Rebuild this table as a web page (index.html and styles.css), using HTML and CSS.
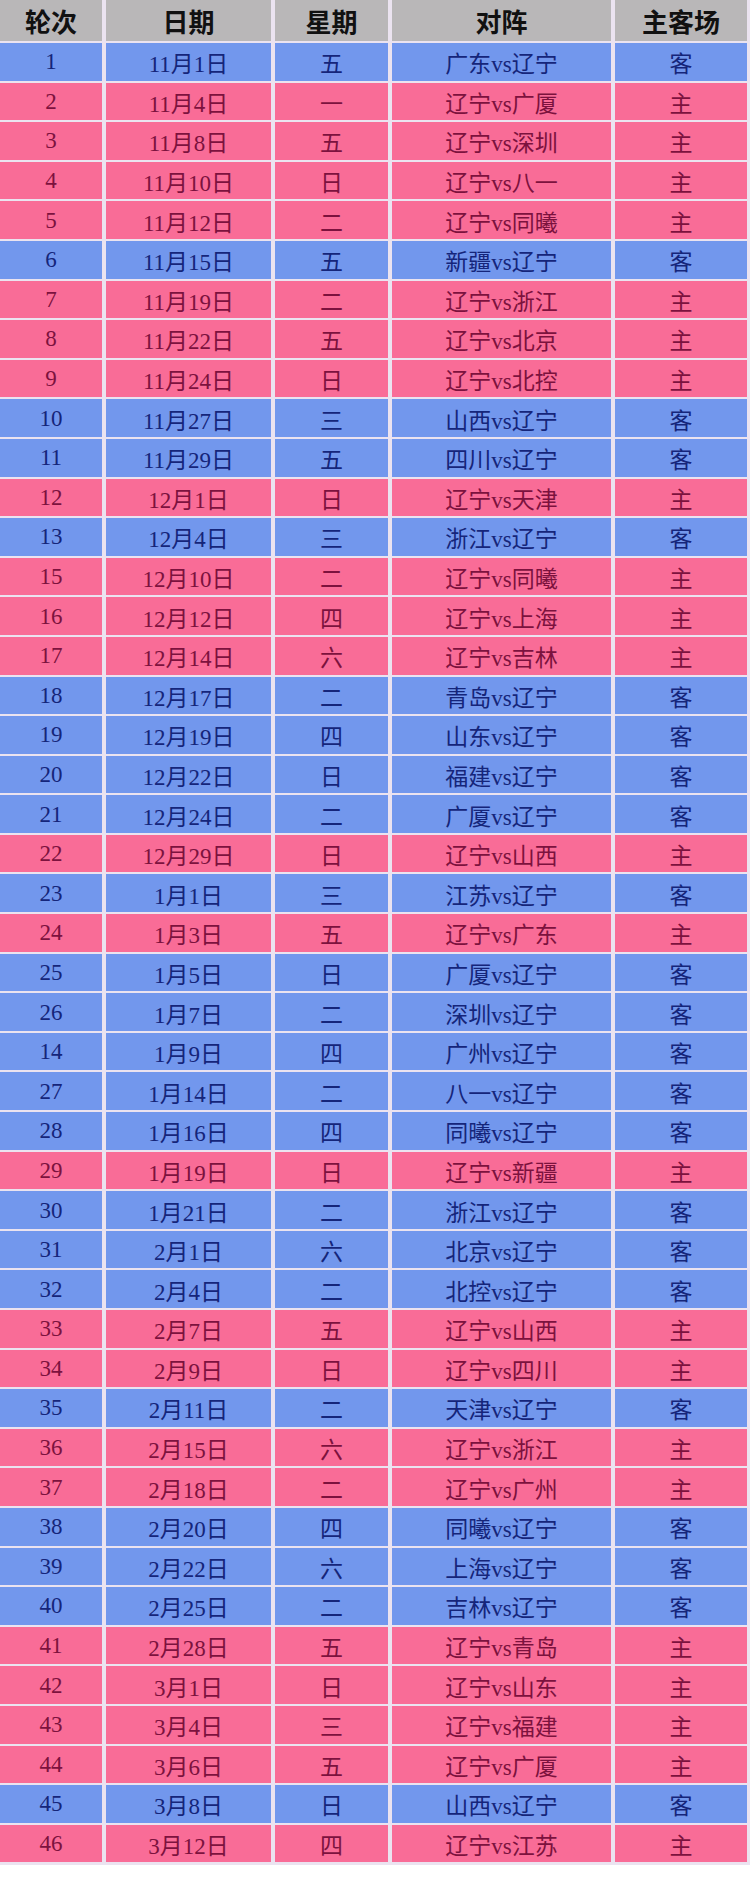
FILE: index.html
```html
<!DOCTYPE html>
<html lang="zh">
<head>
<meta charset="utf-8">
<title>赛程</title>
<link rel="stylesheet" href="styles.css">
</head>
<body>
<div class="sched">
  <div class="row head"><div>轮次</div><div>日期</div><div>星期</div><div>对阵</div><div>主客场</div></div>
  <div class="row away"><div>1</div><div>11月1日</div><div>五</div><div>广东vs辽宁</div><div>客</div></div>
  <div class="row home"><div>2</div><div>11月4日</div><div>一</div><div>辽宁vs广厦</div><div>主</div></div>
  <div class="row home"><div>3</div><div>11月8日</div><div>五</div><div>辽宁vs深圳</div><div>主</div></div>
  <div class="row home"><div>4</div><div>11月10日</div><div>日</div><div>辽宁vs八一</div><div>主</div></div>
  <div class="row home"><div>5</div><div>11月12日</div><div>二</div><div>辽宁vs同曦</div><div>主</div></div>
  <div class="row away"><div>6</div><div>11月15日</div><div>五</div><div>新疆vs辽宁</div><div>客</div></div>
  <div class="row home"><div>7</div><div>11月19日</div><div>二</div><div>辽宁vs浙江</div><div>主</div></div>
  <div class="row home"><div>8</div><div>11月22日</div><div>五</div><div>辽宁vs北京</div><div>主</div></div>
  <div class="row home"><div>9</div><div>11月24日</div><div>日</div><div>辽宁vs北控</div><div>主</div></div>
  <div class="row away"><div>10</div><div>11月27日</div><div>三</div><div>山西vs辽宁</div><div>客</div></div>
  <div class="row away"><div>11</div><div>11月29日</div><div>五</div><div>四川vs辽宁</div><div>客</div></div>
  <div class="row home"><div>12</div><div>12月1日</div><div>日</div><div>辽宁vs天津</div><div>主</div></div>
  <div class="row away"><div>13</div><div>12月4日</div><div>三</div><div>浙江vs辽宁</div><div>客</div></div>
  <div class="row home"><div>15</div><div>12月10日</div><div>二</div><div>辽宁vs同曦</div><div>主</div></div>
  <div class="row home"><div>16</div><div>12月12日</div><div>四</div><div>辽宁vs上海</div><div>主</div></div>
  <div class="row home"><div>17</div><div>12月14日</div><div>六</div><div>辽宁vs吉林</div><div>主</div></div>
  <div class="row away"><div>18</div><div>12月17日</div><div>二</div><div>青岛vs辽宁</div><div>客</div></div>
  <div class="row away"><div>19</div><div>12月19日</div><div>四</div><div>山东vs辽宁</div><div>客</div></div>
  <div class="row away"><div>20</div><div>12月22日</div><div>日</div><div>福建vs辽宁</div><div>客</div></div>
  <div class="row away"><div>21</div><div>12月24日</div><div>二</div><div>广厦vs辽宁</div><div>客</div></div>
  <div class="row home"><div>22</div><div>12月29日</div><div>日</div><div>辽宁vs山西</div><div>主</div></div>
  <div class="row away"><div>23</div><div>1月1日</div><div>三</div><div>江苏vs辽宁</div><div>客</div></div>
  <div class="row home"><div>24</div><div>1月3日</div><div>五</div><div>辽宁vs广东</div><div>主</div></div>
  <div class="row away"><div>25</div><div>1月5日</div><div>日</div><div>广厦vs辽宁</div><div>客</div></div>
  <div class="row away"><div>26</div><div>1月7日</div><div>二</div><div>深圳vs辽宁</div><div>客</div></div>
  <div class="row away"><div>14</div><div>1月9日</div><div>四</div><div>广州vs辽宁</div><div>客</div></div>
  <div class="row away"><div>27</div><div>1月14日</div><div>二</div><div>八一vs辽宁</div><div>客</div></div>
  <div class="row away"><div>28</div><div>1月16日</div><div>四</div><div>同曦vs辽宁</div><div>客</div></div>
  <div class="row home"><div>29</div><div>1月19日</div><div>日</div><div>辽宁vs新疆</div><div>主</div></div>
  <div class="row away"><div>30</div><div>1月21日</div><div>二</div><div>浙江vs辽宁</div><div>客</div></div>
  <div class="row away"><div>31</div><div>2月1日</div><div>六</div><div>北京vs辽宁</div><div>客</div></div>
  <div class="row away"><div>32</div><div>2月4日</div><div>二</div><div>北控vs辽宁</div><div>客</div></div>
  <div class="row home"><div>33</div><div>2月7日</div><div>五</div><div>辽宁vs山西</div><div>主</div></div>
  <div class="row home"><div>34</div><div>2月9日</div><div>日</div><div>辽宁vs四川</div><div>主</div></div>
  <div class="row away"><div>35</div><div>2月11日</div><div>二</div><div>天津vs辽宁</div><div>客</div></div>
  <div class="row home"><div>36</div><div>2月15日</div><div>六</div><div>辽宁vs浙江</div><div>主</div></div>
  <div class="row home"><div>37</div><div>2月18日</div><div>二</div><div>辽宁vs广州</div><div>主</div></div>
  <div class="row away"><div>38</div><div>2月20日</div><div>四</div><div>同曦vs辽宁</div><div>客</div></div>
  <div class="row away"><div>39</div><div>2月22日</div><div>六</div><div>上海vs辽宁</div><div>客</div></div>
  <div class="row away"><div>40</div><div>2月25日</div><div>二</div><div>吉林vs辽宁</div><div>客</div></div>
  <div class="row home"><div>41</div><div>2月28日</div><div>五</div><div>辽宁vs青岛</div><div>主</div></div>
  <div class="row home"><div>42</div><div>3月1日</div><div>日</div><div>辽宁vs山东</div><div>主</div></div>
  <div class="row home"><div>43</div><div>3月4日</div><div>三</div><div>辽宁vs福建</div><div>主</div></div>
  <div class="row home"><div>44</div><div>3月6日</div><div>五</div><div>辽宁vs广厦</div><div>主</div></div>
  <div class="row away"><div>45</div><div>3月8日</div><div>日</div><div>山西vs辽宁</div><div>客</div></div>
  <div class="row home"><div>46</div><div>3月12日</div><div>四</div><div>辽宁vs江苏</div><div>主</div></div>
</div>
</body>
</html>
```

FILE: styles.css
```css
html, body {
  margin: 0;
  padding: 0;
  background: #ffffff;
}

.sched {
  width: 750px;
  box-sizing: border-box;
  padding: 0 3px 3px 0;
  background: #ebe3f0;
  display: flex;
  flex-direction: column;
  gap: 2px;
  font-family: "Liberation Serif", "Noto Sans CJK SC", serif;
  font-size: 23px;
}

.row {
  display: grid;
  grid-template-columns: 102px 165px 113px 219px 132px;
  column-gap: 4px;
  height: 37.6px;
}

.row > div {
  display: flex;
  align-items: center;
  justify-content: center;
  white-space: nowrap;
  padding-top: 1px;
}

.head {
  height: 41px;
}

.head > div {
  background: #b9b7b8;
  color: #111111;
  font-family: "Noto Sans CJK SC", sans-serif;
  font-weight: 700;
  font-size: 26px;
  padding-top: 0;
}

.away > div {
  background: #7297ed;
  color: #15257a;
}

.home > div {
  background: #f96c97;
  color: #7c123e;
}
```
